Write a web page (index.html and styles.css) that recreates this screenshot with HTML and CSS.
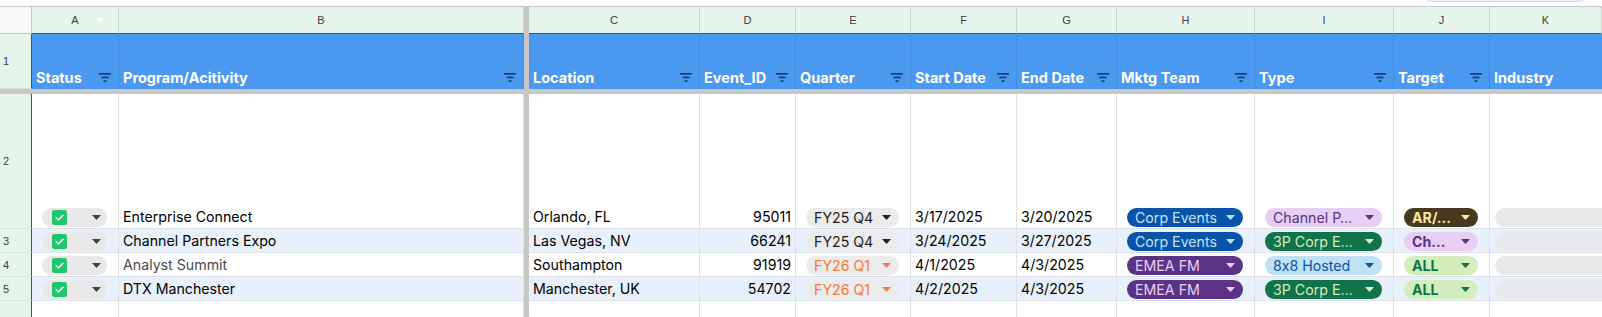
FILE: index.html
```html
<!DOCTYPE html>
<html>
<head>
<meta charset="utf-8">
<link rel="stylesheet" href="styles.css">
</head>
<body>
<div class="topbox"></div>
<div class="sheet">
  <!-- column header row -->
  <div class="corner"></div>
  <div class="ch ch-a">A<svg class="ch-arrow" width="8" height="5" viewBox="0 0 8 5"><path d="M0 0h8L4 5z"/></svg></div>
  <div class="ch">B</div>
  <div class="vd vd-top"></div>
  <div class="ch">C</div>
  <div class="ch">D</div>
  <div class="ch">E</div>
  <div class="ch">F</div>
  <div class="ch">G</div>
  <div class="ch">H</div>
  <div class="ch">I</div>
  <div class="ch">J</div>
  <div class="ch">K</div>

  <!-- row 1 header -->
  <div class="rh">1</div>
  <div class="hd"><span>Status</span><svg class="flt" width="12" height="9" viewBox="0 0 12 9"><rect x="0" y="0" width="12" height="1.7"/><rect x="2.5" y="3.6" width="7" height="1.7"/><rect x="4.5" y="7.2" width="3" height="1.7"/></svg></div>
  <div class="hd"><span>Program/Acitivity</span><svg class="flt" width="12" height="9" viewBox="0 0 12 9"><rect x="0" y="0" width="12" height="1.7"/><rect x="2.5" y="3.6" width="7" height="1.7"/><rect x="4.5" y="7.2" width="3" height="1.7"/></svg></div>
  <div class="vd"></div>
  <div class="hd"><span>Location</span><svg class="flt" width="12" height="9" viewBox="0 0 12 9"><rect x="0" y="0" width="12" height="1.7"/><rect x="2.5" y="3.6" width="7" height="1.7"/><rect x="4.5" y="7.2" width="3" height="1.7"/></svg></div>
  <div class="hd"><span>Event_ID</span><svg class="flt" width="12" height="9" viewBox="0 0 12 9"><rect x="0" y="0" width="12" height="1.7"/><rect x="2.5" y="3.6" width="7" height="1.7"/><rect x="4.5" y="7.2" width="3" height="1.7"/></svg></div>
  <div class="hd"><span>Quarter</span><svg class="flt" width="12" height="9" viewBox="0 0 12 9"><rect x="0" y="0" width="12" height="1.7"/><rect x="2.5" y="3.6" width="7" height="1.7"/><rect x="4.5" y="7.2" width="3" height="1.7"/></svg></div>
  <div class="hd"><span>Start Date</span><svg class="flt" width="12" height="9" viewBox="0 0 12 9"><rect x="0" y="0" width="12" height="1.7"/><rect x="2.5" y="3.6" width="7" height="1.7"/><rect x="4.5" y="7.2" width="3" height="1.7"/></svg></div>
  <div class="hd"><span>End Date</span><svg class="flt" width="12" height="9" viewBox="0 0 12 9"><rect x="0" y="0" width="12" height="1.7"/><rect x="2.5" y="3.6" width="7" height="1.7"/><rect x="4.5" y="7.2" width="3" height="1.7"/></svg></div>
  <div class="hd"><span>Mktg Team</span><svg class="flt" width="12" height="9" viewBox="0 0 12 9"><rect x="0" y="0" width="12" height="1.7"/><rect x="2.5" y="3.6" width="7" height="1.7"/><rect x="4.5" y="7.2" width="3" height="1.7"/></svg></div>
  <div class="hd"><span>Type</span><svg class="flt" width="12" height="9" viewBox="0 0 12 9"><rect x="0" y="0" width="12" height="1.7"/><rect x="2.5" y="3.6" width="7" height="1.7"/><rect x="4.5" y="7.2" width="3" height="1.7"/></svg></div>
  <div class="hd"><span>Target</span><svg class="flt" width="12" height="9" viewBox="0 0 12 9"><rect x="0" y="0" width="12" height="1.7"/><rect x="2.5" y="3.6" width="7" height="1.7"/><rect x="4.5" y="7.2" width="3" height="1.7"/></svg></div>
  <div class="hd last"><span>Industry</span></div>

  <!-- frozen divider -->
  <div class="hdiv"></div>

  <!-- row 2 -->
  <div class="rh">2</div>
  <div class="c cc"><div class="chip st"><svg class="cb" width="15" height="15" viewBox="0 0 15 15"><rect width="15" height="15" rx="2.5"/><path d="M4 7.6l2.4 2.4 4.6-4.8"/></svg><svg class="tri" width="9" height="5" viewBox="0 0 9 5"><path d="M0 0h9L4.5 5z"/></svg></div></div>
  <div class="c">Enterprise Connect</div>
  <div class="vd"></div>
  <div class="c">Orlando, FL</div>
  <div class="c num">95011</div>
  <div class="c cc"><div class="chip q">FY25 Q4<svg class="tri" width="9" height="5" viewBox="0 0 9 5"><path d="M0 0h9L4.5 5z"/></svg></div></div>
  <div class="c">3/17/2025</div>
  <div class="c">3/20/2025</div>
  <div class="c cc"><div class="chip dblue">Corp Events<svg class="tri" width="9" height="5" viewBox="0 0 9 5"><path d="M0 0h9L4.5 5z"/></svg></div></div>
  <div class="c cc"><div class="chip lpurple">Channel P…<svg class="tri" width="9" height="5" viewBox="0 0 9 5"><path d="M0 0h9L4.5 5z"/></svg></div></div>
  <div class="c cc"><div class="chip brown b">AR/…<svg class="tri" width="9" height="5" viewBox="0 0 9 5"><path d="M0 0h9L4.5 5z"/></svg></div></div>
  <div class="c ck"><div class="chip empty"></div></div>

  <!-- row 3 -->
  <div class="rh">3</div>
  <div class="c cc band"><div class="chip st"><svg class="cb" width="15" height="15" viewBox="0 0 15 15"><rect width="15" height="15" rx="2.5"/><path d="M4 7.6l2.4 2.4 4.6-4.8"/></svg><svg class="tri" width="9" height="5" viewBox="0 0 9 5"><path d="M0 0h9L4.5 5z"/></svg></div></div>
  <div class="c band">Channel Partners Expo</div>
  <div class="vd"></div>
  <div class="c band">Las Vegas, NV</div>
  <div class="c num band">66241</div>
  <div class="c cc band"><div class="chip q">FY25 Q4<svg class="tri" width="9" height="5" viewBox="0 0 9 5"><path d="M0 0h9L4.5 5z"/></svg></div></div>
  <div class="c band">3/24/2025</div>
  <div class="c band">3/27/2025</div>
  <div class="c cc band"><div class="chip dblue">Corp Events<svg class="tri" width="9" height="5" viewBox="0 0 9 5"><path d="M0 0h9L4.5 5z"/></svg></div></div>
  <div class="c cc band"><div class="chip dgreen">3P Corp E…<svg class="tri" width="9" height="5" viewBox="0 0 9 5"><path d="M0 0h9L4.5 5z"/></svg></div></div>
  <div class="c cc band"><div class="chip lpurple b">Ch…<svg class="tri" width="9" height="5" viewBox="0 0 9 5"><path d="M0 0h9L4.5 5z"/></svg></div></div>
  <div class="c ck band"><div class="chip empty"></div></div>

  <!-- row 4 -->
  <div class="rh">4</div>
  <div class="c cc"><div class="chip st"><svg class="cb" width="15" height="15" viewBox="0 0 15 15"><rect width="15" height="15" rx="2.5"/><path d="M4 7.6l2.4 2.4 4.6-4.8"/></svg><svg class="tri" width="9" height="5" viewBox="0 0 9 5"><path d="M0 0h9L4.5 5z"/></svg></div></div>
  <div class="c grey">Analyst Summit</div>
  <div class="vd"></div>
  <div class="c">Southampton</div>
  <div class="c num">91919</div>
  <div class="c cc"><div class="chip q orange">FY26 Q1<svg class="tri" width="9" height="5" viewBox="0 0 9 5"><path d="M0 0h9L4.5 5z"/></svg></div></div>
  <div class="c">4/1/2025</div>
  <div class="c">4/3/2025</div>
  <div class="c cc"><div class="chip dpurple">EMEA FM<svg class="tri" width="9" height="5" viewBox="0 0 9 5"><path d="M0 0h9L4.5 5z"/></svg></div></div>
  <div class="c cc"><div class="chip lblue">8x8 Hosted<svg class="tri" width="9" height="5" viewBox="0 0 9 5"><path d="M0 0h9L4.5 5z"/></svg></div></div>
  <div class="c cc"><div class="chip lgreen b">ALL<svg class="tri" width="9" height="5" viewBox="0 0 9 5"><path d="M0 0h9L4.5 5z"/></svg></div></div>
  <div class="c ck"><div class="chip empty"></div></div>

  <!-- row 5 -->
  <div class="rh">5</div>
  <div class="c cc band"><div class="chip st"><svg class="cb" width="15" height="15" viewBox="0 0 15 15"><rect width="15" height="15" rx="2.5"/><path d="M4 7.6l2.4 2.4 4.6-4.8"/></svg><svg class="tri" width="9" height="5" viewBox="0 0 9 5"><path d="M0 0h9L4.5 5z"/></svg></div></div>
  <div class="c band">DTX Manchester</div>
  <div class="vd"></div>
  <div class="c band">Manchester, UK</div>
  <div class="c num band">54702</div>
  <div class="c cc band"><div class="chip q orange">FY26 Q1<svg class="tri" width="9" height="5" viewBox="0 0 9 5"><path d="M0 0h9L4.5 5z"/></svg></div></div>
  <div class="c band">4/2/2025</div>
  <div class="c band">4/3/2025</div>
  <div class="c cc band"><div class="chip dpurple">EMEA FM<svg class="tri" width="9" height="5" viewBox="0 0 9 5"><path d="M0 0h9L4.5 5z"/></svg></div></div>
  <div class="c cc band"><div class="chip dgreen">3P Corp E…<svg class="tri" width="9" height="5" viewBox="0 0 9 5"><path d="M0 0h9L4.5 5z"/></svg></div></div>
  <div class="c cc band"><div class="chip lgreen b">ALL<svg class="tri" width="9" height="5" viewBox="0 0 9 5"><path d="M0 0h9L4.5 5z"/></svg></div></div>
  <div class="c ck band"><div class="chip empty"></div></div>

  <!-- row 6 -->
  <div class="rh"></div>
  <div class="c"></div>
  <div class="c"></div>
  <div class="vd"></div>
  <div class="c"></div>
  <div class="c"></div>
  <div class="c"></div>
  <div class="c"></div>
  <div class="c"></div>
  <div class="c"></div>
  <div class="c"></div>
  <div class="c"></div>
  <div class="c ck"></div>
</div>
</body>
</html>
```

FILE: styles.css
```css
* { box-sizing: border-box; }

body {
  margin: 0;
  width: 1602px;
  height: 317px;
  overflow: hidden;
  position: relative;
  background: #ffffff;
  font-family: Inter, "Liberation Sans", Arial, sans-serif;
  font-feature-settings: "calt" 0;
}

.topbox {
  position: absolute;
  left: 1422px;
  top: -20px;
  width: 166px;
  height: 22px;
  border: 1px solid #d2dae6;
  border-radius: 0 0 9px 9px;
  background: #eef3fa;
}

.sheet {
  display: grid;
  grid-template-columns: 32px 87px 405px 5px 171px 96px 115px 106px 100px 138px 139px 96px 112px;
  grid-template-rows: 28px 55px 5px 135px 24px 24px 24px 24px;
  margin-top: 6px;
}

/* column header row */
.corner {
  background: #f8f9fa;
  border-top: 1px solid #c4c7c5;
  border-bottom: 1px solid #c4c7c5;
  border-right: 1px solid #c4c7c5;
}

.ch {
  position: relative;
  background: #e6f5ec;
  border-top: 1px solid #c4c7c5;
  border-bottom: 1px solid #137333;
  border-right: 1px solid #c9d6cd;
  display: flex;
  align-items: center;
  justify-content: center;
  font-family: "Liberation Sans", Arial, sans-serif;
  font-size: 11px;
  color: #3c4043;
}

.ch-arrow {
  position: absolute;
  right: 14px;
  top: 11px;
  fill: #ffffff;
}

.vd {
  background: #c7c7c7;
}

.vd-top {
  border-top: 1px solid #c4c7c5;
}

/* row header */
.rh {
  background: #e6f5ec;
  border-right: 1px solid #137333;
  border-bottom: 1px solid #d3e5d9;
  display: flex;
  align-items: center;
  padding-left: 3px;
  font-family: "Liberation Sans", Arial, sans-serif;
  font-size: 11px;
  color: #3c4043;
}

/* blue table header */
.hd {
  background: #4b98f0;
  border-right: 1px solid #4189dc;
  display: flex;
  align-items: flex-end;
  justify-content: space-between;
  padding: 0 7px 3px 4px;
  color: #ffffff;
  font-weight: 700;
  font-size: 14.5px;
  line-height: 17px;
  white-space: nowrap;
  overflow: hidden;
}

.hd.last {
  border-right: none;
}

.flt {
  flex: none;
  margin-left: 4px;
  margin-bottom: 4px;
  fill: #17407a;
}

.hdiv {
  grid-column: 1 / -1;
  background: #c7c7c7;
}

/* data cells */
.c {
  border-right: 1px solid #e1e1e1;
  border-bottom: 1px solid #dde2ea;
  display: flex;
  align-items: flex-end;
  padding: 0 4px 3px 4px;
  font-size: 14.2px;
  line-height: 17px;
  color: #000000;
  white-space: nowrap;
  overflow: hidden;
}

.num {
  justify-content: flex-end;
}

.grey {
  color: #4a4a4a;
}

.band {
  background: #e8f0fb;
}

.cc {
  padding: 0 11px 1px 10px;
}

.ck {
  padding: 0 0 1px 5px;
  border-right: none;
}

.chip {
  width: 100%;
  height: 19px;
  border-radius: 10px;
  display: flex;
  align-items: center;
  padding: 0 8px 0 8px;
  font-size: 14.2px;
  line-height: 17px;
  white-space: nowrap;
  overflow: hidden;
}

.chip .tri {
  flex: none;
  margin-left: auto;
  fill: currentColor;
}

.b {
  font-weight: 700;
}

.st {
  background: #e8e8e8;
  padding-left: 10px;
  padding-right: 6px;
  color: #444444;
}

.cb rect {
  fill: #22c46c;
}

.cb path {
  fill: none;
  stroke: #e9fff1;
  stroke-width: 1.4;
  stroke-linecap: round;
  stroke-linejoin: round;
}

.q {
  background: #ebebeb;
  color: #1f1f1f;
}

.orange {
  color: #f47b3a;
}

.dblue {
  background: #0a53a8;
  color: #bfe1f6;
}

.lpurple {
  background: #e6cff2;
  color: #5a3286;
}

.brown {
  background: #473822;
  color: #ffe5a0;
}

.dgreen {
  background: #11734b;
  color: #d4edbc;
}

.dpurple {
  background: #5a3286;
  color: #e6cff2;
}

.lblue {
  background: #bfe1f6;
  color: #0a53a8;
}

.lgreen {
  background: #d4edbc;
  color: #11734b;
}

.empty {
  background: #e8e9eb;
  border-radius: 10px 0 0 10px;
}
```
